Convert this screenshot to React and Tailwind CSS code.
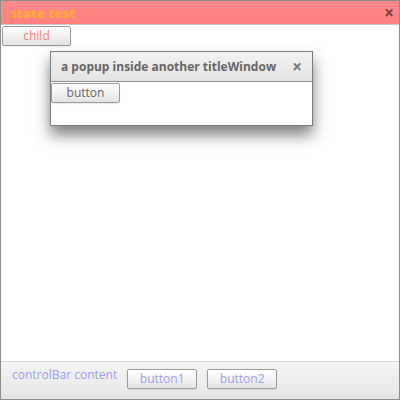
import React from "react";

const font = { fontFamily: '"Open Sans", "Noto Sans", sans-serif' };

function Btn({ children, className = "" }) {
  return (
    <div
      className={
        "flex items-center justify-center h-[20px] w-[69px] rounded-[2px] border border-[#9a9a9a] bg-gradient-to-b from-[#ffffff] to-[#e4e4e4] text-[12px] leading-none shadow-[0_1px_1px_rgba(0,0,0,0.08)] " +
        className
      }
    >
      {children}
    </div>
  );
}

export default function App() {
  return (
    <div style={font} className="relative w-[400px] h-[400px] bg-white border border-[#8c8c8c] flex flex-col overflow-hidden">
      <div className="h-[24px] shrink-0 bg-gradient-to-b from-[#ff8a8a] to-[#ff7f7f] border-b border-[#c8c8c8] flex items-center pl-[9px] pr-[5px]">
        <span className="text-[13px] font-extrabold text-[#fcab35] leading-none mt-[1px]">state test</span>
        <span className="ml-auto text-[17px] font-bold text-[#7a3f3f] leading-none">×</span>
      </div>
      <div className="flex-1 pt-[1px] pl-[1px]">
        <Btn className="text-[#ff7f7f]">child</Btn>
      </div>
      <div className="h-[38px] shrink-0 border-t border-[#d4d4d4] bg-gradient-to-b from-[#f4f4f4] to-[#e6e6e6] flex items-start pl-[11px] pt-[6px]">
        <span className="text-[12px] text-[#9d9df2] leading-none mt-[1px]">controlBar content</span>
        <div className="flex gap-[10px] ml-[10px] mt-[1px]">
          <Btn className="text-[#9d9df2] w-[70px]">button1</Btn>
          <Btn className="text-[#9d9df2] w-[70px]">button2</Btn>
        </div>
      </div>

      <div className="absolute left-[49px] top-[50px] w-[263px] h-[75px] bg-white border border-[#7c7c7c] shadow-[0_9px_14px_rgba(0,0,0,0.5)] flex flex-col">
        <div className="h-[30px] shrink-0 bg-gradient-to-b from-[#f2f2f2] to-[#e3e3e3] border-b border-[#8e8e8e] flex items-center pl-[10px] pr-[10px]">
          <span className="text-[12px] font-bold text-[#666666] leading-none">a popup inside another titleWindow</span>
          <span className="ml-auto text-[17px] font-bold text-[#777777] leading-none">×</span>
        </div>
        <div className="pt-[1px] pl-0">
          <Btn className="text-[#666666]">button</Btn>
        </div>
      </div>
    </div>
  );
}
